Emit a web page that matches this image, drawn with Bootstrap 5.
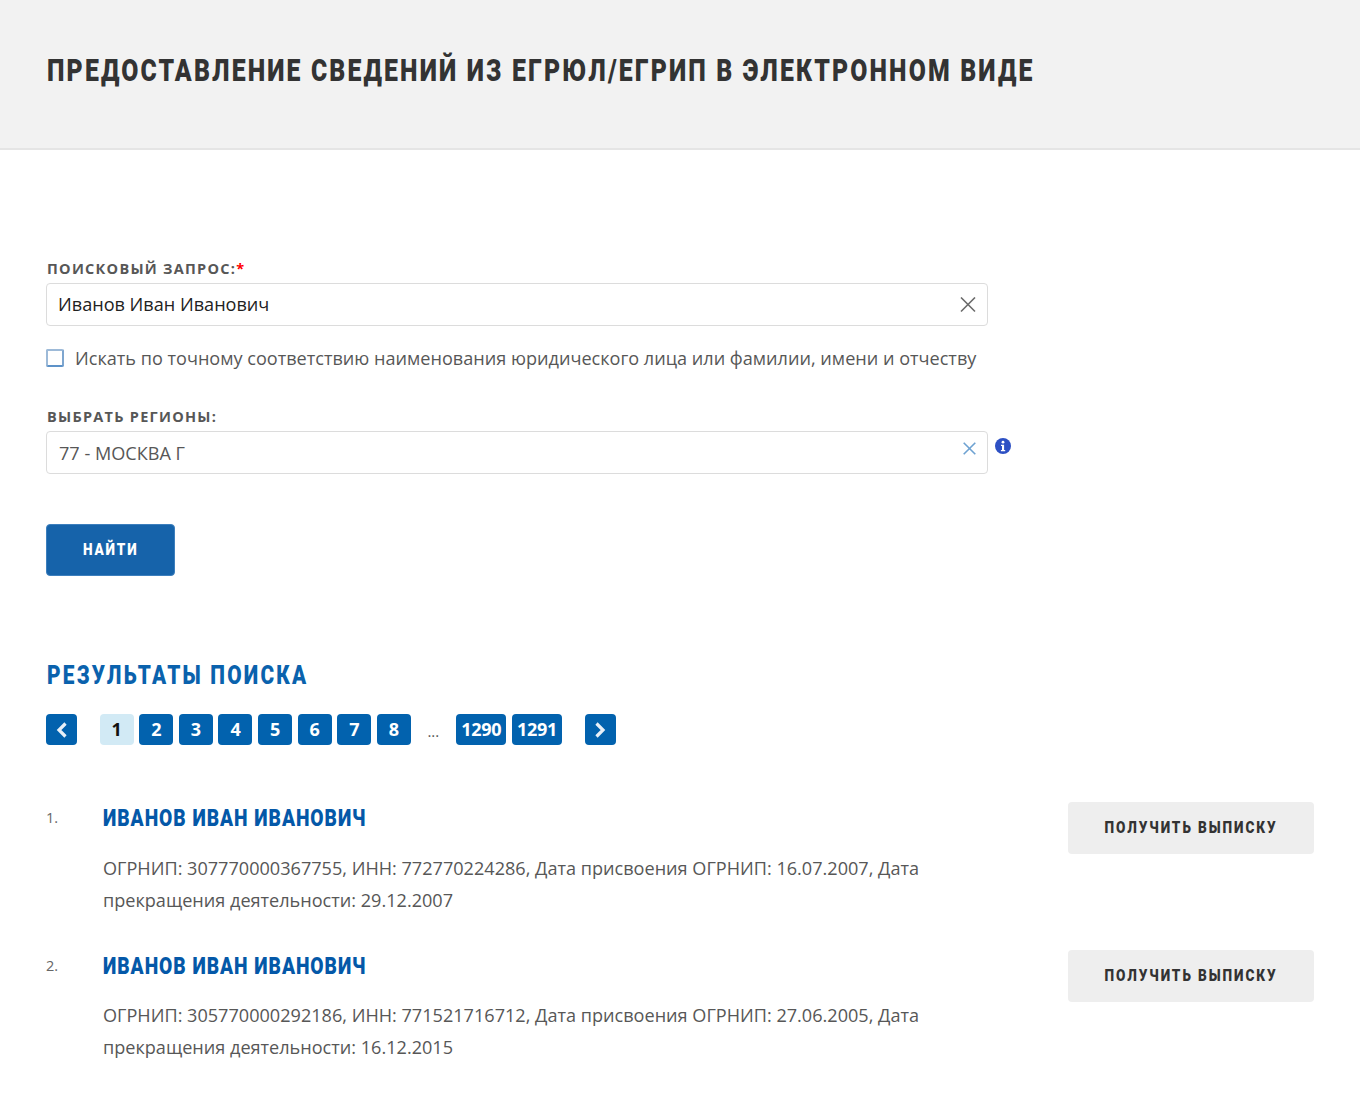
<!doctype html>
<html lang="ru"><head><meta charset="utf-8"><title>ЕГРЮЛ</title>
<link href="https://cdn.jsdelivr.net/npm/bootstrap@5.3.0/dist/css/bootstrap.min.css" rel="stylesheet">
<style>
html,body{height:100%}
body{font-family:"Open Sans","Noto Sans",sans-serif;color:#575757;background:#fff;font-size:18.1px;overflow:hidden}
.din{font-family:"Roboto","Liberation Sans",sans-serif;font-weight:900}
.sq{display:inline-block;white-space:nowrap;transform:scaleX(.8);transform-origin:left center}
.sq-c{transform-origin:center}
.page-top{height:150px;background:#f2f2f2;border-bottom:2px solid #e5e5e5;padding:51px 47px 0}
.page-title{font-size:31px;line-height:40px;letter-spacing:2.68px;color:#333;margin:0}
.main-area{padding:110px 46px 0 46px}
.fld-label{font-size:14.5px;line-height:17px;font-weight:700;letter-spacing:1.27px;color:#575757;margin:0 0 6px 1px;display:block}
.req{color:#f00}
.fld-box{width:942px;height:43px;border:1px solid #dcdcdc;border-radius:4px;padding:0 11px;background:#fff}
.fld-box.val-dark{color:#222}
.fld-box.val-gray{padding-left:12px;color:#575757}
.val-gray span{padding-top:2px}
.chk-line{margin-top:22px;height:20px;line-height:20px;white-space:nowrap}
.chk-box{width:18px;height:18px;border:2px solid #9dbad8;border-bottom-color:#5d92c8;border-right-color:#7ea6cf;border-radius:2px;margin-right:11px;flex:none;margin-top:1px}
.second-fld{margin-top:40px}
.info-dot{margin:7px 0 0 6.500px;flex:none}
.btn-find{margin-top:50px;width:129px;height:52px;background:#1663aa;border:1px solid #3d7fbd;color:#fff;font-size:17px;letter-spacing:2.3px;border-radius:4px;padding:0}
.res-title{font-size:26px;line-height:36px;letter-spacing:2.8px;color:#0a62ad;margin:81px 0 0 1px}
.pager{margin:21px 0 0;height:31px}
.pg{height:31px;min-width:34px;padding:0 5px;border-radius:4px;background:#0262ae;color:#fff;font-weight:700;font-size:18px;letter-spacing:-.3px;margin-right:5.6px}
.pg.arrow{width:31px;min-width:31px;padding:0}
.pg.on{background:#d2eaf5;color:#111;margin-left:17px}
.pg.wide{min-width:50px}
.pg.last-arrow{margin-left:17px}
.dots{width:40px;font-size:15px;color:#575757;padding:3px 6px 0 0}
.res-list{margin-top:57px}
.res-item{height:147.5px}
.res-num{width:57px;flex:none;font-size:14.5px;line-height:18px;padding-top:7px;color:#666}
.res-body{width:840px}
.res-name{font-size:24px;line-height:32px;letter-spacing:1.2px;color:#0458a8;margin:0 0 17.700px}
.res-text{line-height:32.300px;margin:0}
.btn-get{width:246px;height:52px;background:#eee;border:0;border-radius:4px;color:#333;font-size:17px;letter-spacing:2.4px;padding:0}
</style></head><body>
<header class="page-top"><h1 class="page-title din"><span class="sq">ПРЕДОСТАВЛЕНИЕ СВЕДЕНИЙ ИЗ ЕГРЮЛ/ЕГРИП В ЭЛЕКТРОННОМ ВИДЕ</span></h1></header>
<main class="main-area">
<label class="fld-label">ПОИСКОВЫЙ ЗАПРОС:<span class="req">*</span></label>
<div class="fld-box val-dark d-flex align-items-center justify-content-between"><span>Иванов Иван Иванович</span>
<svg width="16" height="16" viewBox="0 0 16 16" fill="none" stroke="#6b6b6b" stroke-width="1.6"><path d="M1 .5l14 14M15 .5L1 14.500"/></svg></div>
<div class="chk-line d-flex"><span class="chk-box"></span><span>Искать по точному соответствию наименования юридического лица или фамилии, имени и отчеству</span></div>
<label class="fld-label second-fld">ВЫБРАТЬ РЕГИОНЫ:</label>
<div class="d-flex align-items-start"><div class="fld-box val-gray d-flex align-items-center justify-content-between"><span>77 - МОСКВА Г</span>
<svg width="13" height="13" viewBox="0 0 13 13" class="mb-2" fill="none" stroke="#6ea2d2" stroke-width="1.6"><path d="M.7.7l11.6 11.6M12.300.7L.7 12.300"/></svg></div>
<svg class="info-dot" width="16" height="16" viewBox="0 0 16 16"><circle cx="8" cy="8" r="8" fill="#2d50c4"/><circle cx="8" cy="4.200" r="1.400" fill="#fff"/><path d="M6 6.800h3.100v5.200H10.200v1.200H5.900V12h1.100V8H6z" fill="#fff"/></svg></div>
<button class="btn-find din d-block" type="button"><span class="sq sq-c">НАЙТИ</span></button>
<h2 class="res-title din"><span class="sq">РЕЗУЛЬТАТЫ ПОИСКА</span></h2>
<nav class="pager d-flex align-items-center">
<a class="pg arrow d-flex align-items-center justify-content-center"><svg width="12" height="18" viewBox="0 0 12 18" fill="none" stroke="#e8f0f8" stroke-width="3.200"><path d="M9.500 2.500L3 9l6.500 6.500"/></svg></a>
<span class="pg on d-flex align-items-center justify-content-center">1</span>
<span class="pg d-flex align-items-center justify-content-center">2</span>
<span class="pg d-flex align-items-center justify-content-center">3</span>
<span class="pg d-flex align-items-center justify-content-center">4</span>
<span class="pg d-flex align-items-center justify-content-center">5</span>
<span class="pg d-flex align-items-center justify-content-center">6</span>
<span class="pg d-flex align-items-center justify-content-center">7</span>
<span class="pg d-flex align-items-center justify-content-center">8</span>
<span class="dots text-center">...</span>
<span class="pg wide d-flex align-items-center justify-content-center">1290</span>
<span class="pg wide d-flex align-items-center justify-content-center">1291</span>
<a class="pg arrow last-arrow d-flex align-items-center justify-content-center"><svg width="12" height="18" viewBox="0 0 12 18" fill="none" stroke="#e8f0f8" stroke-width="3.200"><path d="M2.500 2.500L9 9l-6.500 6.500"/></svg></a>
</nav>
<div class="res-list">
<div class="res-item d-flex justify-content-between">
<div class="d-flex"><span class="res-num">1.</span><div class="res-body"><h3 class="res-name din"><span class="sq">ИВАНОВ ИВАН ИВАНОВИЧ</span></h3><p class="res-text">ОГРНИП: 307770000367755, ИНН: 772770224286, Дата присвоения ОГРНИП: 16.07.2007, Дата прекращения деятельности: 29.12.2007</p></div></div>
<button class="btn-get din" type="button"><span class="sq sq-c">ПОЛУЧИТЬ ВЫПИСКУ</span></button></div>
<div class="res-item d-flex justify-content-between">
<div class="d-flex"><span class="res-num">2.</span><div class="res-body"><h3 class="res-name din"><span class="sq">ИВАНОВ ИВАН ИВАНОВИЧ</span></h3><p class="res-text">ОГРНИП: 305770000292186, ИНН: 771521716712, Дата присвоения ОГРНИП: 27.06.2005, Дата прекращения деятельности: 16.12.2015</p></div></div>
<button class="btn-get din" type="button"><span class="sq sq-c">ПОЛУЧИТЬ ВЫПИСКУ</span></button></div>
</div>
</main>
<script src="https://cdn.jsdelivr.net/npm/bootstrap@5.3.0/dist/js/bootstrap.bundle.min.js"></script>
</body></html>
